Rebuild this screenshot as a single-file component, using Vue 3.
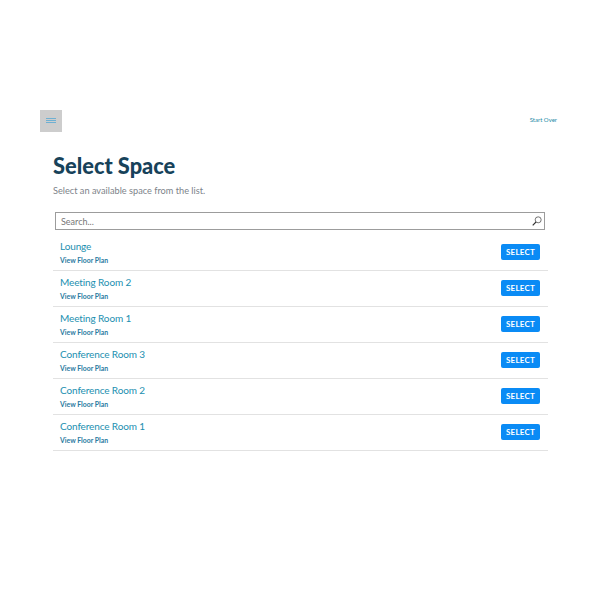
<template>
  <div class="page">
    <div class="topbar">
      <button class="menu-btn">
        <svg width="10" height="6" viewBox="0 0 10 6"><path d="M0 .5h10M0 2.5h10M0 4.5h10" stroke="#6fb0d2" stroke-width="1" fill="none" /></svg>
      </button>
      <a class="start-over">Start Over</a>
    </div>
    <div class="content">
      <h1 class="title">Select Space</h1>
      <p class="subtitle">Select an available space from the list.</p>
      <div class="search">
        <span class="placeholder">Search...</span>
        <svg width="10" height="10" viewBox="0 0 11 11"><circle cx="6.8" cy="4.2" r="3.3" stroke="#555" stroke-width="0.9" fill="none" /><path d="M4.4 6.6L.8 10.2" stroke="#333" stroke-width="1.2" /></svg>
      </div>
      <div class="list">
        <div v-for="space in spaces" :key="space" class="row">
          <div class="info">
            <div class="name">{{ space }}</div>
            <a class="plan">View Floor Plan</a>
          </div>
          <button class="select">SELECT</button>
        </div>
      </div>
    </div>
  </div>
</template>

<script setup>
const spaces = ['Lounge', 'Meeting Room 2', 'Meeting Room 1', 'Conference Room 3', 'Conference Room 2', 'Conference Room 1'];
</script>

<style>
html, body { margin: 0; background: #fff; }
</style>

<style scoped>
.page {
  width: 600px;
  height: 600px;
  box-sizing: border-box;
  padding: 110px 43px 0 40px;
  font-family: Lato, "Open Sans", sans-serif;
}
.topbar { display: flex; justify-content: space-between; align-items: flex-start; height: 22px; }
.menu-btn {
  width: 22px; height: 22px; padding: 0; border: 0;
  background: #cdcdcd;
  display: flex; align-items: center; justify-content: center;
}
.start-over { margin-top: 6px; font-size: 6px; line-height: 8px; color: #1c8aa6; }
.content { padding: 21px 9px 0 13px; }
.title { margin: 0; font-size: 21.8px; line-height: 26px; font-weight: 900; color: #17425a; }
.subtitle { margin: 6px 0 0; font-size: 9.2px; line-height: 12px; color: #7d838a; }
.search {
  box-sizing: border-box;
  margin: 15px 3px 0 2px;
  height: 18px;
  border: 1px solid #9c9c9c;
  display: flex; align-items: center; justify-content: space-between;
  padding: 0 2px 0 5px;
}
.placeholder { font-family: Lato, sans-serif; font-size: 9px; color: #777; }
.list { margin-top: 5px; }
.row {
  height: 35px;
  padding: 0 8px 0 7px;
  border-bottom: 1px solid #e2e2e2;
  display: flex; align-items: center; justify-content: space-between;
}
.info { padding-bottom: 1px; }
.name { font-family: Lato, sans-serif; font-size: 10px; line-height: 14px; color: #1b8fb0; letter-spacing: -0.12px; }
.plan { display: block; margin-top: 3px; font-family: Lato, sans-serif; font-size: 6.9px; line-height: 9px; font-weight: 700; color: #2a7a9f; }
.select {
  width: 39px; height: 16px; margin-bottom: 2px; padding: 0; border: 0; border-radius: 2px;
  background: #0a8bf5; color: #fff;
  font-family: Lato, sans-serif; font-size: 8px; font-weight: 700; letter-spacing: 0.2px;
}
</style>
